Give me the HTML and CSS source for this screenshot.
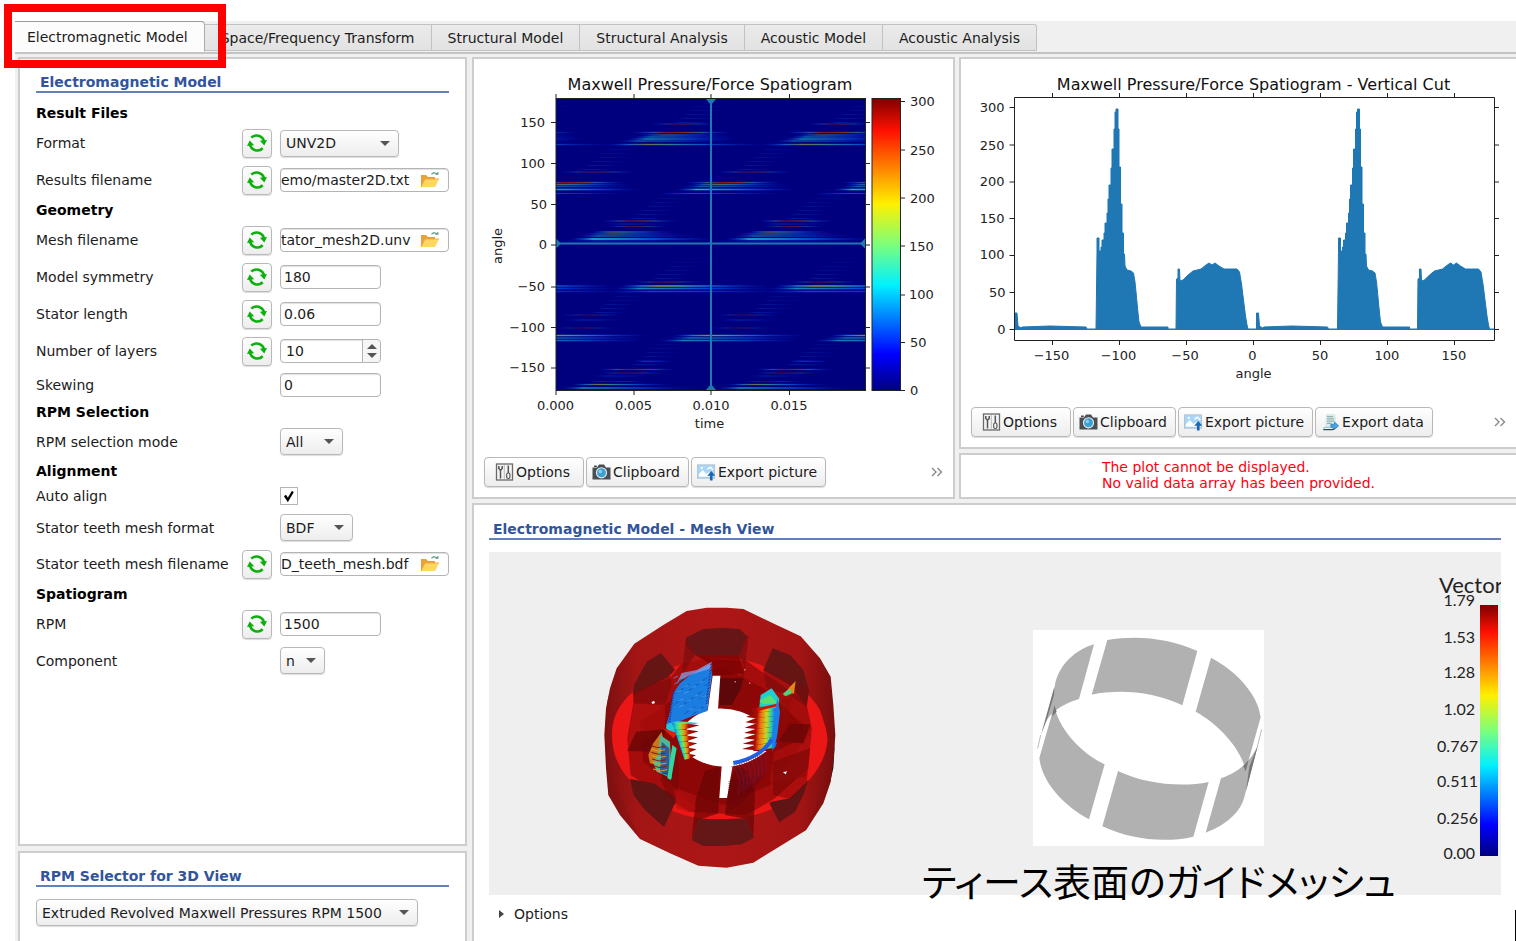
FILE: index.html
```html
<!DOCTYPE html>
<html lang="en">
<head>
<meta charset="utf-8">
<title>Electromagnetic Model</title>
<link rel="stylesheet" href="styles.css">
</head>
<body>
<svg class="defs" aria-hidden="true">
  <defs>
    <linearGradient id="jet" x1="0" y1="1" x2="0" y2="0">
      <stop offset="0" stop-color="#000080"/><stop offset=".125" stop-color="#0000ff"/>
      <stop offset=".36" stop-color="#00f0ff"/><stop offset=".5" stop-color="#7dff7a"/>
      <stop offset=".64" stop-color="#fff000"/><stop offset=".89" stop-color="#ff1000"/>
      <stop offset="1" stop-color="#800000"/>
    </linearGradient>
    <linearGradient id="s-hot"><stop offset="0" stop-color="#0030ff" stop-opacity="0"/><stop offset=".14" stop-color="#1a70d0"/><stop offset=".26" stop-color="#8a8a40"/><stop offset=".38" stop-color="#3aa090"/><stop offset=".6" stop-color="#0a60e0"/><stop offset="1" stop-color="#0020d0" stop-opacity="0"/></linearGradient>
    <linearGradient id="s-cyan"><stop offset="0" stop-color="#0030ff" stop-opacity="0"/><stop offset=".16" stop-color="#20b0c8"/><stop offset=".35" stop-color="#1890c8"/><stop offset=".6" stop-color="#0850e0"/><stop offset="1" stop-color="#0020d0" stop-opacity="0"/></linearGradient>
    <linearGradient id="s-blue"><stop offset="0" stop-color="#0030ff" stop-opacity="0"/><stop offset=".25" stop-color="#0050d8"/><stop offset=".6" stop-color="#0030d0"/><stop offset="1" stop-color="#0020c0" stop-opacity="0"/></linearGradient>
    <linearGradient id="s-red"><stop offset="0" stop-color="#0030ff" stop-opacity="0"/><stop offset=".22" stop-color="#305090"/><stop offset=".36" stop-color="#80102a"/><stop offset=".55" stop-color="#80301a"/><stop offset=".7" stop-color="#185ca0"/><stop offset="1" stop-color="#0020d0" stop-opacity="0"/></linearGradient>
    <linearGradient id="g-left"><stop offset="0" stop-color="#0b6fe0"/><stop offset=".15" stop-color="#20d8c0"/><stop offset=".3" stop-color="#8ae040"/><stop offset=".45" stop-color="#f08010"/><stop offset=".6" stop-color="#b01008"/><stop offset="1" stop-color="#7c0404"/></linearGradient>
    <linearGradient id="g-right"><stop offset="0" stop-color="#8a0404"/><stop offset=".35" stop-color="#a80c04"/><stop offset=".48" stop-color="#f07010"/><stop offset=".66" stop-color="#c8d820"/><stop offset=".8" stop-color="#30d0a0"/><stop offset=".9" stop-color="#1090f0"/><stop offset="1" stop-color="#0a50c8"/></linearGradient>
    <linearGradient id="g-hull"><stop offset="0" stop-color="#7c1010"/><stop offset=".14" stop-color="#a31515"/><stop offset=".5" stop-color="#ad1616"/><stop offset=".85" stop-color="#a31414"/><stop offset="1" stop-color="#780e0e"/></linearGradient>

    <symbol id="i-refresh" viewBox="0 0 20 20">
      <path d="M4.3 4.700A7.700 8 0 0 1 17 8.200M15.700 15.300A7.700 8 0 0 1 3 11.600" fill="none" stroke="#0cb00c" stroke-width="2.600"/>
      <path d="M12.800 7.800 20 7 17.300 12.600ZM7.200 12.200 0 13 2.700 7.400Z" fill="#0cb00c"/>
    </symbol>
    <symbol id="i-folder" viewBox="0 0 20 18">
      <path d="M1 16V4h5l2 2h7v3" fill="#e9a23a"/><path d="M1 16 5 8h14l-4 8z" fill="#ffd75e"/><path d="M1 16 5 8h14" fill="none" stroke="#e8a43c" stroke-width=".8"/>
      <path d="M11.5 3.2c2-2 4.5-2 5.5.6" fill="none" stroke="#6b9c94" stroke-width="1.3"/><path d="m15 3.6 3.600.2-.4-3.200z" fill="#6b9c94"/>
    </symbol>
    <symbol id="i-options" viewBox="0 0 18 18">
      <rect x="1" y="1" width="16" height="16" fill="#f4f4f4" stroke="#6a6a6a" stroke-width="1.300"/>
      <path d="M3.300 3v2.500L5 7.200 6.700 5.500V3M5 6.500V15.500" fill="none" stroke="#555" stroke-width="1.500"/>
      <path d="M8.800 2v14" stroke="#bbb"/><path d="M12.800 2.500v8" stroke="#555" stroke-width="1.500"/><rect x="11.200" y="10" width="3.200" height="5.500" rx="1.400" fill="#fff" stroke="#555" stroke-width="1.200"/>
    </symbol>
    <symbol id="i-camera" viewBox="0 0 18 18">
      <path d="M0 4.500h4.500L6.500 1.500h5l2 3H18V16.500H0z" fill="#4a4e52"/><rect x="1.500" y="2.500" width="2.800" height="1.500" fill="#4a4e52"/>
      <circle cx="9" cy="9.800" r="5.600" fill="#e6eef2"/><circle cx="9" cy="9.800" r="4.500" fill="#3f9fd0"/><circle cx="7.800" cy="8.500" r="1.800" fill="#8ed0ee"/>
    </symbol>
    <symbol id="i-picture" viewBox="0 0 20 18">
      <rect x=".5" y="1.500" width="18" height="14" fill="#a9d6f8" stroke="#b4c4d0"/><path d="M2 14V11l4-4 4 4 3-2 4.500 4v1z" fill="#fff"/><path d="m11 6 3-2 3 3" fill="none" stroke="#fff" stroke-width="1.500"/><circle cx="5" cy="4.800" r="1.200" fill="#fff"/>
      <path d="M13.600 18v-5h-2.800l4.200-5 4.200 5h-2.800v5z" fill="#1c67ad"/>
    </symbol>
    <symbol id="i-data" viewBox="0 0 18 20">
      <path d="M4 1h9l2 2v13H3z" fill="#dcebea"/><path d="M5 4h7M5 6.500h8M5 9h8M5 11.500h5" stroke="#93b3b2" stroke-width="1.200"/><path d="M1 18.500h10l2-1" fill="none" stroke="#2b4757" stroke-width="1.600"/><path d="M1 17c1-1 2-1 3-1h6" fill="none" stroke="#9cc" stroke-width="1.500"/>
      <path d="M9.500 12.500h4V10.200l4.500 4-4.500 4v-2.400h-4z" fill="#4aa8e6" stroke="#1d70b4" stroke-width=".8"/>
    </symbol>
  </defs>
</svg>

<div class="app">
  <nav class="tabs" role="tablist">
    <button class="tab tab-active" role="tab" aria-selected="true">Electromagnetic Model</button>
    <button class="tab" role="tab">Space/Frequency Transform</button>
    <button class="tab" role="tab">Structural Model</button>
    <button class="tab" role="tab">Structural Analysis</button>
    <button class="tab" role="tab">Acoustic Model</button>
    <button class="tab" role="tab">Acoustic Analysis</button>
  </nav>

  <main class="workspace">
    <div class="sidebar">
      <section class="panel settings">
        <h2 class="title">Electromagnetic Model</h2>
        <form class="form">
          <h3 class="group">Result Files</h3>
          <div class="row"><label for="format">Format</label><button type="button" class="refresh" aria-label="Reset format"><svg><use href="#i-refresh"/></svg></button><span class="combo combo-l"><select id="format"><option>UNV2D</option></select></span></div>
          <div class="row"><label for="results">Results filename</label><button type="button" class="refresh" aria-label="Reset results filename"><svg><use href="#i-refresh"/></svg></button><span class="file"><input id="results" type="text" value="emo/master2D.txt"><button type="button" aria-label="Browse results"><svg><use href="#i-folder"/></svg></button></span></div>
          <h3 class="group">Geometry</h3>
          <div class="row"><label for="mesh">Mesh filename</label><button type="button" class="refresh" aria-label="Reset mesh filename"><svg><use href="#i-refresh"/></svg></button><span class="file"><input id="mesh" type="text" value="tator_mesh2D.unv"><button type="button" aria-label="Browse mesh"><svg><use href="#i-folder"/></svg></button></span></div>
          <div class="row"><label for="symmetry">Model symmetry</label><button type="button" class="refresh" aria-label="Reset symmetry"><svg><use href="#i-refresh"/></svg></button><input class="field" id="symmetry" type="text" value="180"></div>
          <div class="row"><label for="length">Stator length</label><button type="button" class="refresh" aria-label="Reset length"><svg><use href="#i-refresh"/></svg></button><input class="field" id="length" type="text" value="0.06"></div>
          <div class="row"><label for="layers">Number of layers</label><button type="button" class="refresh" aria-label="Reset layers"><svg><use href="#i-refresh"/></svg></button><span class="spin"><input id="layers" type="number" value="10"><span class="steps"><button type="button" class="up" aria-label="More layers"></button><button type="button" class="down" aria-label="Fewer layers"></button></span></span></div>
          <div class="row row-field"><label for="skewing">Skewing</label><input class="field" id="skewing" type="text" value="0"></div>
          <h3 class="group">RPM Selection</h3>
          <div class="row row-combo"><label for="mode">RPM selection mode</label><span class="combo combo-m"><select id="mode"><option>All</option></select></span></div>
          <h3 class="group">Alignment</h3>
          <div class="row row-check"><label for="align">Auto align</label><span class="check"><input id="align" type="checkbox" checked><svg viewBox="0 0 18 18"><path d="M5 8.500 7.800 13 12.800 4.500" fill="none" stroke="#000" stroke-width="2.400"/></svg></span></div>
          <div class="row row-combo"><label for="teeth-format">Stator teeth mesh format</label><span class="combo combo-b"><select id="teeth-format"><option>BDF</option></select></span></div>
          <div class="row"><label for="teeth-file">Stator teeth mesh filename</label><button type="button" class="refresh" aria-label="Reset teeth mesh"><svg><use href="#i-refresh"/></svg></button><span class="file"><input id="teeth-file" type="text" value="D_teeth_mesh.bdf"><button type="button" aria-label="Browse teeth mesh"><svg><use href="#i-folder"/></svg></button></span></div>
          <h3 class="group">Spatiogram</h3>
          <div class="row"><label for="rpm">RPM</label><button type="button" class="refresh" aria-label="Reset RPM"><svg><use href="#i-refresh"/></svg></button><input class="field" id="rpm" type="text" value="1500"></div>
          <div class="row row-combo"><label for="component">Component</label><span class="combo combo-s"><select id="component"><option>n</option></select></span></div>
        </form>
      </section>
      <section class="panel selector">
        <h2 class="title"><label for="view-rpm">RPM Selector for 3D View</label></h2>
        <span class="combo combo-xl"><select id="view-rpm"><option>Extruded Revolved Maxwell Pressures RPM 1500</option></select></span>
      </section>
    </div>

    <div class="content">
      <div class="plots">
        <section class="panel plot">
          <svg class="chart chart-a" viewBox="474 59 479 398" role="img" aria-label="Maxwell Pressure/Force Spatiogram">
            <text class="chart-title" x="710" y="90">Maxwell Pressure/Force Spatiogram</text>
            <rect x="556" y="98.500" width="309.500" height="292" fill="#00007f"/>
            <g id="streaks" clip-path="url(#heat-clip)"></g>
            <clipPath id="heat-clip"><rect x="556" y="98" width="309.500" height="292"/></clipPath>
            <path d="M711 99V390M556 243.500H865" stroke="#1f77b4" stroke-width="2"/>
            <path d="M706 99h10l-5 6zM706 390h10l-5-6zM556 238.500v10l5-5zM865 238.500v10l-5-5z" fill="#1f77b4"/>
            <rect x="556" y="98.500" width="309.500" height="292" class="axis"/>
            <path class="axis" d="M556 98v-4M634 98v-4M711 98v-4M789.500 98v-4M556 391v4M634 391v4M711 391v4M789.500 391v4M551 122.500h5M551 163.500h5M551 204.500h5M551 245h5M551 287h5M551 327.500h5M551 368h5M866 122.500h4M866 163.500h4M866 204.500h4M866 245h4M866 287h4M866 327.500h4M866 368h4"/>
            <rect x="872" y="98.500" width="28.500" height="292" fill="url(#jet)" stroke="#222" stroke-width="1"/>
            <path class="axis" d="M901 101.500h4M901 150h4M901 198h4M901 246h4M901 295h4M901 342.500h4M901 390.500h4"/>
            <g class="tick end"><text x="545" y="127">150</text><text x="545" y="168">100</text><text x="547" y="209">50</text><text x="547" y="249">0</text><text x="545" y="291">−50</text><text x="545" y="332">−100</text><text x="545" y="372">−150</text></g>
            <g class="tick"><text x="910" y="106">300</text><text x="910" y="155">250</text><text x="910" y="203">200</text><text x="909" y="251">150</text><text x="909" y="299">100</text><text x="910" y="347">50</text><text x="910" y="395">0</text></g>
            <g class="tick mid"><text x="555.500" y="410">0.000</text><text x="633.500" y="410">0.005</text><text x="711" y="410">0.010</text><text x="789" y="410">0.015</text><text x="709.500" y="428">time</text><text x="502" y="246" transform="rotate(-90 502 246)">angle</text></g>
          </svg>
          <div class="toolbar">
            <button class="tool"><svg class="ic"><use href="#i-options"/></svg>Options</button>
            <button class="tool"><svg class="ic"><use href="#i-camera"/></svg>Clipboard</button>
            <button class="tool"><svg class="ic"><use href="#i-picture"/></svg>Export picture</button>
            <button class="more" aria-label="More tools"><svg viewBox="0 0 12 10"><path d="m1 1 4 4-4 4M6.500 1l4 4-4 4" fill="none" stroke="#8a8a8a" stroke-width="1.400"/></svg></button>
          </div>
        </section>

        <div class="stack">
          <section class="panel plot open">
            <svg class="chart chart-b" viewBox="961 59 555 348" role="img" aria-label="Maxwell Pressure/Force Spatiogram - Vertical Cut">
              <text class="chart-title" x="1253.500" y="90">Maxwell Pressure/Force Spatiogram - Vertical Cut</text>
              <g id="cut" fill="#1f77b4" stroke="#1f77b4"></g>
              <path d="M1014.500 97.500H1494.500V340.500H1014.500z" class="axis"/>
              <path class="axis" d="M1052.500 97v-4M1119.500 97v-4M1186.500 97v-4M1253.500 97v-4M1320.500 97v-4M1387.500 97v-4M1454.500 97v-4M1052.500 341v4M1119.500 341v4M1186.500 341v4M1253.500 341v4M1320.500 341v4M1387.500 341v4M1454.500 341v4M1009.500 107.500h5M1009.500 145h5M1009.500 182h5M1009.500 218.500h5M1009.500 255.500h5M1009.500 292.500h5M1009.500 329.500h5M1495 107.500h4M1495 145h4M1495 182h4M1495 218.500h4M1495 255.500h4M1495 292.500h4M1495 329.500h4"/>
              <g class="tick end"><text x="1004.500" y="112">300</text><text x="1004.500" y="150">250</text><text x="1004.500" y="186">200</text><text x="1004.500" y="223">150</text><text x="1004.500" y="259">100</text><text x="1005.500" y="297">50</text><text x="1005.500" y="334">0</text></g>
              <g class="tick mid"><text x="1051.500" y="360">−150</text><text x="1118.500" y="360">−100</text><text x="1185" y="360">−50</text><text x="1252.500" y="360">0</text><text x="1320" y="360">50</text><text x="1387" y="360">100</text><text x="1454" y="360">150</text><text x="1253.500" y="378">angle</text></g>
            </svg>
            <div class="toolbar">
              <button class="tool"><svg class="ic"><use href="#i-options"/></svg>Options</button>
              <button class="tool"><svg class="ic"><use href="#i-camera"/></svg>Clipboard</button>
              <button class="tool"><svg class="ic"><use href="#i-picture"/></svg>Export picture</button>
              <button class="tool"><svg class="ic"><use href="#i-data"/></svg>Export data</button>
              <button class="more" aria-label="More tools"><svg viewBox="0 0 12 10"><path d="m1 1 4 4-4 4M6.500 1l4 4-4 4" fill="none" stroke="#8a8a8a" stroke-width="1.400"/></svg></button>
            </div>
          </section>
          <section class="panel notice open">
            <p>The plot cannot be displayed.<br>No valid data array has been provided.</p>
          </section>
        </div>
      </div>

      <section class="panel mesh open">
        <h2 class="title">Electromagnetic Model - Mesh View</h2>
        <div class="scene">
          <svg class="view" viewBox="489 552 1012 343" role="img" aria-label="Stator mesh">
            <rect x="489" y="552" width="1012" height="343" fill="#efefef"/>
            <svg x="590" y="595" width="260" height="285" viewBox="0 0 780 855">
              <path d="M55 300 45 400 62 380zM735 440 718 570 730 520z" fill="#111"/>
              <path fill="url(#g-hull)" d="M290 48 350 38 410 38 460 42 560 90 632 124 690 190 722 245 730 330 736 420 730 500 722 560 700 625 648 706 560 760 490 803 410 818 325 812 240 775 150 732 90 660 55 600 48 520 43 420 48 340 60 280 80 220 133 146 220 90z"/>
              <path fill="#7a1212" fill-opacity=".3" d="M45 420 62 540 150 732 90 660 55 600zM736 420 715 540 648 706 700 625 722 560z"/>
              <path fill="#eb1616" d="M66 420C66 330 130 275 235 225 300 185 440 175 525 215 600 250 660 290 690 345 705 390 715 420 712 440 706 510 650 580 560 635 480 680 310 690 225 635 130 580 66 520 66 420z"/>
              <path fill="#a50c0c" d="M130 325 130 290 240 250 275 205 340 192 470 198 530 240 648 320 665 400 655 520 555 610 470 660 300 650 215 600 122 540 112 430z"/>
              <path fill="#850505" fill-opacity=".75" d="M150 380 240 320 285 235 400 218 520 280 640 390 640 440 540 570 400 630 260 580 160 500z"/>
              <path fill="#b01010" d="M132 325 225 322 225 400 112 468 120 400zM648 545 540 560 552 470 665 420z" fill-opacity=".65"/>
              <path fill="#661616" d="M288 128 340 102 400 98 450 103 471 124 448 182 315 180 286 150z"/>
              <path fill="#7c0c0c" d="M288 128 315 180 300 200 276 238 284 160zM471 124 448 182 462 210 445 280 455 300 476 120z" fill-opacity=".7"/>
              <path fill="#7a0202" d="M315 180 448 182 460 235 370 242 368 210z" fill-opacity=".75"/>
              <path fill="#4a0708" d="M390 250 460 250 450 285 425 330 388 330z" fill-opacity=".7"/>
              <path fill="#661515" d="M132 270 170 200 213 174 255 225 235 245 130 300zM548 160 600 180 640 225 657 285 650 335 600 270 520 225z"/>
              <path fill="#780c0c" d="M132 325 130 290 240 242 245 270 225 330zM520 225 530 280 600 300 650 335 656 280z" fill-opacity=".6"/>
              <path fill="#6a0606" fill-opacity=".8" d="M138 410 230 402 200 470 112 468zM565 440 600 386 662 388 640 445z"/>
              <path fill="#611414" d="M120 552 190 565 262 610 222 696 165 645 130 600zM655 555 600 610 545 620 538 625 568 682 615 650 640 600z"/>
              <path fill="#6d0606" d="M210 555 262 455 268 540 255 630 235 600zM548 500 550 600 600 612 650 560 660 460z" fill-opacity=".5"/>
              <path fill="#6a0404" fill-opacity=".7" d="M345 528 390 515 385 655 325 675 305 730 318 610zM440 515 470 525 495 590 490 725 470 672 405 660 414 560z"/>
              <path fill="#651717" d="M325 672 470 672 492 728 455 748 400 753 340 753 305 735z"/>
              <path fill="#b60e0e" d="M250 580 300 620 320 640 300 652 260 640z" fill-opacity=".6"/>
              <path fill="#fff" d="M288 385C325 350 365 338 400 341 435 342 465 352 500 372L490 468 530 468C490 500 450 515 405 515 365 515 330 502 300 482z"/>
              <path fill="#fff" d="M368 242h23l-7 100-32 12zM395 514l34-8-18 103h-23z"/>
              <path fill="#1b7de0" d="M250 295 270 265 300 240 362 206 366 240 352 348 310 362 262 382 228 392 240 350z"/>
              <path fill="#8fa8f0" d="M262 262 275 234 320 225 365 200 364 220 300 240z" fill-opacity=".7"/>
              <g id="flow"></g>
              <path fill="#22c8d8" d="M230 388 262 378 290 380 326 384 290 394 262 400 250 420 228 400z"/><path fill="#9be040" d="M256 383 300 381 270 396 250 400z"/>
              <path fill="#e02008" d="M218 400 235 405 262 415 250 430z"/>
              <g id="jags"></g>
              <path fill="#1ed0d0" d="M508 335 512 300 545 280 568 312 563 340z"/><path fill="#5be070" d="M508 318 540 300 562 325 520 328z"/><path fill="#d01505" d="M500 340 560 326 562 334 505 348z"/>
              <path fill="#1880e8" d="M562 310 570 350 562 420 548 470 545 430 555 350z"/>
              <path fill="none" stroke="#1e62e8" stroke-width="12" d="M430 504C480 495 525 470 546 432"/>
              <path fill="#e08a18" d="M580 300 600 275 617 258 612 295 590 305z"/><path fill="#50d080" d="M578 296 600 280 606 296 588 302z"/>
              <path fill="#cf7618" d="M175 480 190 445 215 410 222 440 205 510 180 505z"/><path fill="#50b890" d="M210 420 240 440 245 550 200 530 190 505 205 470z"/><path fill="#345a9a" d="M215 440 238 460 238 545 210 530z"/><path fill="#30d8a0" d="M247 450 260 460 243 555 232 550z"/>
              <g id="wake"></g>
              <path fill="#fff" d="m184 322 8-5 3 7-7 3zM579 532l12-3-4 9zM463 222l4 2-3 3zM434 258l4 2-3 3zM478 262l4 2-3 3z"/>
            </svg>
            <svg x="1020" y="620" width="260" height="240" viewBox="0 0 780 720">
              <rect x="39" y="30" width="693" height="648" fill="#fff"/>
              <g fill="#b1b1b1">
                <path d="M222 73C160 92 113 140 104 200L72 318C85 280 130 250 177 237z"/>
                <path d="M262 60C350 44 450 55 532 93L487 256C400 215 300 207 215 224z"/>
                <path d="M573 113C660 160 715 230 722 292L677 452C665 390 600 315 527 275z"/>
                <path d="M103 258C115 320 175 395 254 433L207 598C120 550 65 480 58 414z"/>
                <path d="M294 453C370 490 480 504 566 486L520 650C430 670 330 658 247 619z"/>
                <path d="M603 475C650 458 690 430 714 375L672 535C660 580 610 620 557 638z"/>
              </g>
              <path d="M103 200 102 225 80 300 63 345 72 312zM103 256 110 275 96 290zM686 420 677 454 670 438zM714 375 678 514 688 440z" fill="#777"/>
              <path d="M62 345 53 385M725 328 712 380" stroke="#999" stroke-width="2"/>
            </svg>
            <text class="bar-title" x="1439" y="593">Vector</text>
            <rect x="1480" y="605" width="18" height="251" fill="url(#jet)"/>
            <g class="bar-tick"><text x="1475" y="606">1.79</text><text x="1475" y="643">1.53</text><text x="1475" y="678">1.28</text><text x="1475" y="715">1.02</text><text x="1478" y="752">0.767</text><text x="1478" y="787">0.511</text><text x="1478" y="824">0.256</text><text x="1475" y="859">0.00</text></g>
          </svg>
          <p class="caption" lang="ja">ティース表面のガイドメッシュ</p>
        </div>
        <button class="disclosure">Options</button>
      </section>
    </div>
  </main>
</div>
<div class="highlight"></div>
<div class="edge"></div>
<script src="script.js"></script>
</body>
</html>
```
FILE: styles.css
```css
* { box-sizing: border-box; }
body { margin: 0; height: 100vh; overflow: hidden; background: #fff; color: #1c1c1c; font: 14px/16px "DejaVu Sans", sans-serif; }
h2, h3, p { margin: 0; }
button, input, select { font: inherit; color: inherit; margin: 0; }
.defs { position: absolute; width: 0; height: 0; }

.app { height: 100vh; padding-top: 21px; margin-left: 15px; background: linear-gradient(#fff 21px, #f0f0f0 21px); display: flex; flex-direction: column; }
.tabs { display: flex; align-items: flex-end; height: 33px; border-bottom: 2px solid #c4c4c4; }
.tab { height: 27px; margin-bottom: 1px; padding: 0 16px; border: 1px solid #c2c2c2; border-left-width: 0; background: linear-gradient(#ebebeb, #e2e2e2); white-space: nowrap; }
.tab:last-child { border-radius: 0 3px 0 0; }
.tab-active { height: 31px; margin-bottom: 0; padding: 0 16px 0 12px; border-color: #999 #aaa #fff; border-radius: 0 4px 0 0; background: #fcfcfc; }

.workspace { flex: 1; min-height: 0; display: grid; grid-template-columns: 449px 1fr; gap: 5px; padding: 3px 0 0 3px; }
.sidebar { display: flex; flex-direction: column; gap: 5px; min-height: 0; }
.content { display: flex; flex-direction: column; gap: 4px; min-width: 0; }
.plots { display: grid; grid-template-columns: 483px 1fr; gap: 4px; }
.stack { display: flex; flex-direction: column; gap: 4px; min-width: 0; }
.panel { background: #fff; border: 2px solid #cdcdcd; }
.open { border-right: 0; }
.settings { flex: 1; padding: 14px 16px; }
.selector { padding: 14px 16px 15px; border-bottom: 0; }
.mesh { flex: 1; padding: 15px 15px 0; border-bottom: 0; }

.title { font-size: 14px; line-height: 18px; color: #32549c; padding-left: 4px; border-bottom: 2px solid #6580b8; margin-bottom: 12px; }
.form { display: flex; flex-direction: column; gap: 7px; }
.group { font-size: 14px; line-height: 16px; color: #000; }
.row { display: grid; grid-template-columns: 206px 30px 1fr; column-gap: 0; align-items: center; min-height: 30px; }
.row > :last-child { grid-column: 3; margin-left: 8px; }
.row label { white-space: nowrap; }
.row-field { min-height: 24px; }
.row-combo { min-height: 29px; }
.row-check { min-height: 20px; }

.refresh, .tool, .combo select { border: 1px solid #b8b8b8; border-radius: 4px; background: linear-gradient(#fff, #ededed); box-shadow: 0 1px 1px #ddd; }
.refresh { width: 30px; height: 29px; padding: 0; display: grid; place-items: center; }
.refresh svg { width: 20px; height: 20px; }
.combo { position: relative; display: block; height: 27px; }
.combo select { appearance: none; width: 100%; height: 27px; padding: 0 5px; }
.combo::after { content: ""; position: absolute; right: 9px; top: 11px; border: 5px solid transparent; border-top-color: #555; border-bottom-width: 0; pointer-events: none; }
.combo-l { width: 119px; }
.combo-m { width: 63px; }
.combo-b { width: 73px; }
.combo-s { width: 45px; }
.combo-xl { width: 382px; }
.field, .file, .spin { height: 24px; border: 1px solid #b4b4b4; border-radius: 4px; background: #fff; box-shadow: inset 0 1px 1px #e2e2e2; }
.field { width: 101px; padding: 0 3px; }
.file { display: flex; width: 169px; }
.file input { flex: 1; min-width: 0; border: 0; padding: 0; background: transparent; }
.file button { width: 36px; border: 0; padding: 0 8px; background: none; display: grid; place-items: center; }
.file svg { width: 20px; height: 18px; }
.spin { display: flex; width: 101px; }
.spin input { flex: 1; min-width: 0; border: 0; padding: 0 5px; background: transparent; appearance: textfield; }
.spin input::-webkit-inner-spin-button { appearance: none; }
.steps { width: 18px; border-left: 1px solid #b4b4b4; display: flex; flex-direction: column; align-items: center; justify-content: center; gap: 4px; background: #f6f6f6; border-radius: 0 4px 4px 0; }
.steps button { width: 0; height: 5px; padding: 0; background: none; border: 5px solid transparent; }
.steps .up { border-bottom-color: #555; border-top-width: 0; }
.steps .down { border-top-color: #555; border-bottom-width: 0; }
.check { position: relative; width: 18px; height: 18px; }
.check input { appearance: none; display: block; width: 18px; height: 18px; border: 1px solid #b4b4b4; background: #fff; }
.check svg { position: absolute; inset: 0; pointer-events: none; }

.chart { display: block; width: 100%; }
.chart-a { height: 398px; }
.chart-b { height: 348px; }
.chart-title { font-size: 16px; text-anchor: middle; fill: #111; }
.tick { font-size: 13px; fill: #222; }
.end { text-anchor: end; }
.mid { text-anchor: middle; }
.axis { fill: none; stroke: #222; stroke-width: 1; }
.toolbar { display: flex; gap: 2px; padding: 0 10px 10px; }
.tool { height: 30px; padding: 0 7px 0 8px; display: flex; align-items: center; gap: 2px; white-space: nowrap; }
.tool:first-child { padding: 0 13px 0 10px; }
.tool:nth-child(2), .tool:nth-child(3), .tool:nth-child(4) { padding: 0 8px 0 5px; }
.ic { width: 19px; height: 18px; }
.more { margin-left: auto; padding: 0; border: 0; background: none; display: grid; place-items: center; }
.more svg { width: 12px; height: 10px; }
.notice { padding: 4px 0 6px; display: flex; justify-content: center; color: #ff0010; }

.scene { position: relative; }
.view { display: block; width: 100%; }
.bar-title { font: 22px Lato, sans-serif; fill: #222; }
.bar-tick { font: 16px Lato, sans-serif; fill: #222; text-anchor: end; }
.caption { position: absolute; right: 105px; bottom: -10px; font: 38px/50px "Noto Sans CJK JP", sans-serif; font-feature-settings: "palt"; color: #000; white-space: nowrap; }
.disclosure { display: flex; align-items: center; gap: 10px; margin-top: 11px; padding: 0 0 0 10px; border: 0; background: none; }
.disclosure::before { content: ""; border: 4px solid transparent; border-left: 5px solid #444; border-right: 0; }
.highlight { position: absolute; left: 4px; top: 4px; width: 222px; height: 64px; border: 8px solid #f00; pointer-events: none; }
.edge { position: absolute; right: 0; bottom: 0; width: 1px; height: 31px; background: #000; }
```
FILE: script.js
```js
const NS = "http://www.w3.org/2000/svg";
function add(parent, name, attrs) {
  const node = document.createElementNS(NS, name);
  for (const key in attrs) node.setAttribute(key, attrs[key]);
  parent.appendChild(node);
}

// Spatiogram streaks: [start x, y, length, gradient, opacity, thickness]
const streaks = [
  [652, 124, 65, "red", .7, 1], [632, 132.5, 100, "red", 1, 1.3], [640, 135, 90, "hot", .6, 1.3], [634, 137, 100, "cyan", .55, 1.5],
  [628, 139, 110, "cyan", .7, 1.6], [620, 141, 110, "cyan", .5, 1.5], [607, 144.500, 160, "hot", .8, 1.3],
  [562, 172, 75, "red", .7, 1], [686, 182.500, 95, "red", 1, 1.3], [690, 184.500, 95, "hot", .7, 1.5], [684, 186.500, 105, "cyan", .5, 1.5],
  [677, 189.500, 120, "cyan", 1, 1.6], [660, 193.500, 120, "blue", .9, 1],
  [603, 221, 75, "red", .9, 1.2], [606, 224, 65, "blue", .5, 1], [608, 226.500, 60, "red", .6, 1], [592, 232, 85, "hot", .8, 1.2],
  [584, 234, 100, "hot", .6, 1.3], [578, 236, 120, "cyan", .5, 1.6], [570, 239, 145, "cyan", .95, 1.8], [562, 241, 140, "blue", .6, 1],
  [634, 282, 70, "red", .7, 1], [620, 286, 150, "hot", 1, 1.600], [614, 288.500, 160, "cyan", .8, 1.6], [610, 291.500, 170, "blue", 1, 1.300],
  [562, 315, 60, "red", .45, 1], [565, 320, 60, "blue", .5, 1], [556, 328, 60, "red", .4, 1],
  [674, 335.500, 130, "hot", 1, 1.400], [669, 338, 130, "cyan", .6, 1.600], [660, 340.500, 140, "cyan", .75, 1.500],
  [635, 361.500, 40, "blue", .6, 1], [600, 369.500, 76, "red", .9, 1.200], [600, 373, 65, "red", .55, 1], [592, 376, 60, "blue", .4, 1],
  [587, 381.500, 60, "red", .4, 1], [572, 384.500, 100, "hot", .8, 1.200], [562, 388, 130, "cyan", .8, 1.500]
];
const heat = document.getElementById("streaks");
for (const [x, y, w, tone, opacity, h] of streaks)
  for (const shift of [-156, 0, 156, 312])
    add(heat, "rect", { x: x + shift, y: y - h / 2, width: w, height: h, fill: `url(#s-${tone})`, opacity });
for (const [x, y, n] of [[672, 122, 6], [578, 169, 9], [628, 218, 9], [650, 278, 6], [590, 312, 8], [628, 364, 8]])
  for (let i = 0; i < n; i++)
    for (const shift of [-156, 0, 156])
      add(heat, "rect", { x: x + shift + i * 5, y: y - i * 4, width: 38, height: 1, fill: "url(#s-blue)", opacity: .32 * (1 - i / n) });

// Vertical cut: outline of one half turn, repeated 180 degrees further
const half = [[1015,313],[1017,313],[1018,326],[1021,328],[1022,327],[1050,326],[1086,327],[1087,329],[1096,329],[1097,252],[1097,252],[1097,238],[1099,238],[1099,251],[1101,251],[1101,247],[1102,247],[1102,240],[1104,240],[1104,233],[1105,233],[1105,223],[1107,223],[1107,213],[1108,213],[1108,199],[1109,199],[1109,185],[1111,185],[1111,168],[1112,168],[1112,149],[1114,149],[1114,129],[1115,129],[1115,112],[1116,112],[1116,109],[1118,109],[1118,129],[1119,129],[1119,167],[1120.500,167],[1120.500,204],[1122,204],[1122,233],[1123.500,233],[1123.500,254],[1124.500,254],[1125,266],[1127,270],[1131,271],[1133.500,273],[1135,282],[1136,292],[1137.500,308],[1139,322],[1141,327],[1165,327],[1168,327],[1168,329],[1176,329],[1176.500,279],[1178,278],[1178,269],[1179.500,269],[1180,281],[1183,280],[1188,275],[1193,271],[1201,269],[1206,265],[1209,263],[1212,265],[1215,263],[1219,266],[1224,269],[1230,269],[1237,269],[1239.500,272],[1241.500,284],[1243.500,300],[1245.500,316],[1247,325],[1248,329],[1256,329]];
const cut = document.getElementById("cut");
for (const shift of [0, 241.500]) {
  const points = half.map(([x, y]) => [Math.min(x + shift, 1494), y].join(",")).join(" ");
  add(cut, "polygon", { points: `${1015 + shift},329.500 ${points} ${Math.min(1257 + shift, 1494)},329.500` });
}

// Pressure vectors on the rotor teeth
const jags = document.getElementById("jags");
for (let i = 0; i < 6; i++) {
  const y = 386 + i * 18;
  add(jags, "path", { d: `M${246 + i * 6} ${y - 2} L${292 + i} ${y} L${328 - i * 2} ${y + 5} L${292 + i} ${y + 15} L${254 + i * 6} ${y + 18}z`, fill: "url(#g-left)" });
}
for (let i = 0; i < 8; i++) {
  const y = 338 + i * 16;
  add(jags, "path", { d: `M562 ${y - 8} L496 ${y} L${470 - i * 2} ${y + 12} L496 ${y + 16} L${562 - i} ${y + 8}z`, fill: "url(#g-right)" });
}
const flow = document.getElementById("flow");
for (let i = 0; i < 46; i++) {
  const x = 250 + (i * 37) % 96, y = 250 + (i * 23) % 110;
  add(flow, "path", { d: `M${x} ${y}l14-7`, stroke: i % 3 ? "#1058b8" : "#58b0f0", "stroke-width": 2 });
}
for (let i = 0; i < 14; i++)
  add(flow, "path", { d: `M${248 - i} ${286 + i * 7}l6 4M${366 - i} ${206 + i * 9}l-6 5`, stroke: "#20289a", "stroke-width": 3 });
const wake = document.getElementById("wake");
for (let i = 0; i < 15; i++) {
  add(wake, "path", { d: `M${425 + i * 7} ${514 - i * 3}Q${460 + i * 5} ${545 - i * 3} ${445 + i * 6} ${600 - i * 5}`, stroke: i % 2 ? "#4c1c3c" : "#8c1038", "stroke-width": 3, fill: "none", opacity: .65 });
  add(wake, "path", { d: `M415 ${560 + i * 6}l${110 - i * 5}-${18}`, stroke: "#5c0818", "stroke-width": 2, opacity: .7 });
}
for (let i = 0; i < 9; i++)
  add(wake, "path", { d: `M${182 + i} ${452 + i * 10}l22 6 20-4`, stroke: i % 2 ? "#e0a020" : "#7c2010", "stroke-width": 3, fill: "none" });
for (let i = 0; i < 10; i++)
  add(wake, "path", { d: `M578 ${310 + i * 10}l${30 - i * 2}-${14}`, stroke: "#8c1008", "stroke-width": 4, opacity: .8 });
```
